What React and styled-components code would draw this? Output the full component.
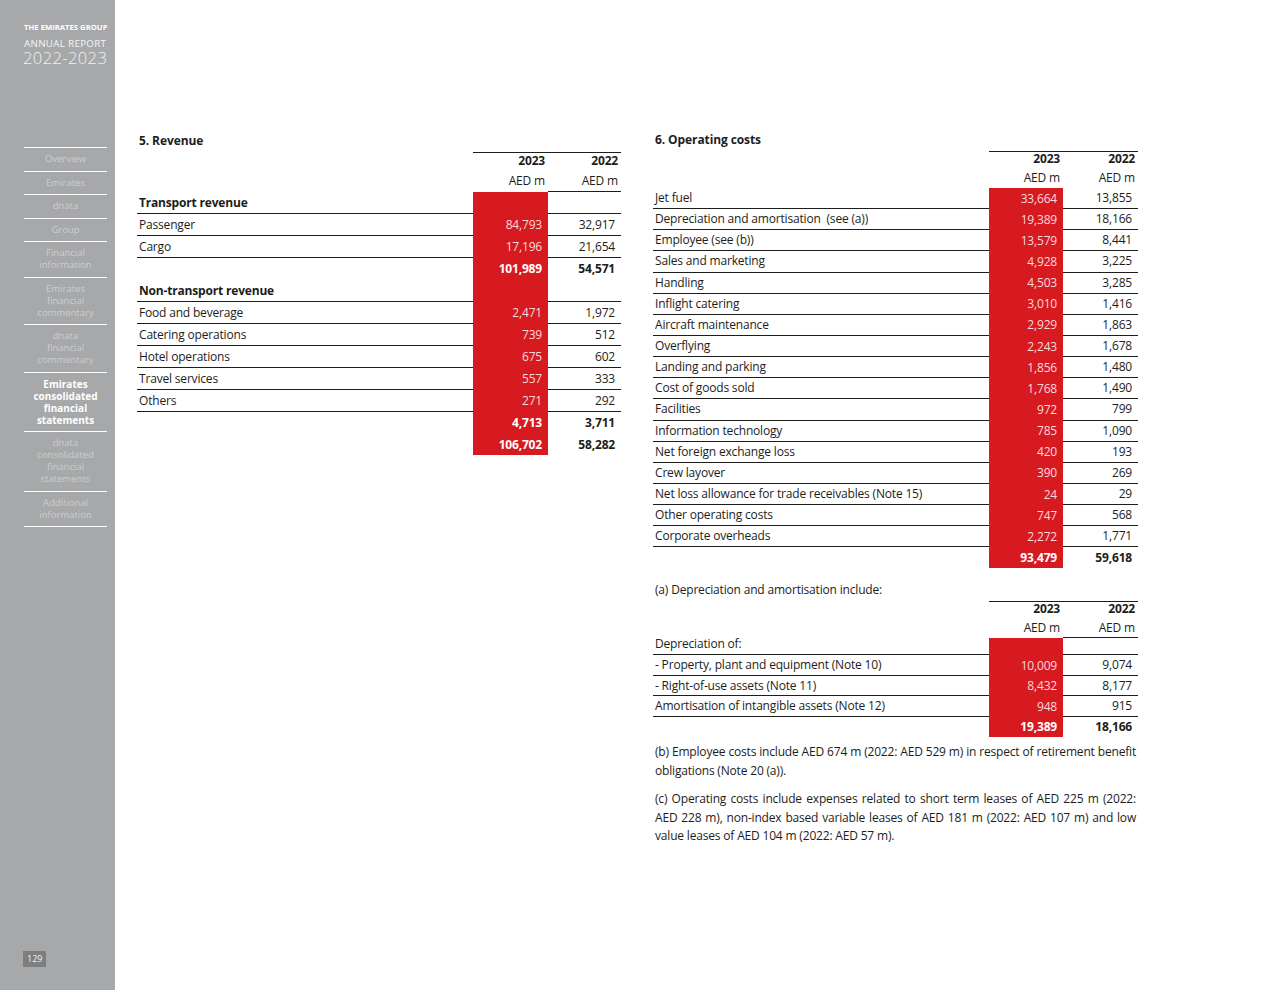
import React from 'react';
import styled, { createGlobalStyle } from 'styled-components';

const RED = '#d71920';
const INK = '#1d1d1b';

const GlobalStyle = createGlobalStyle`
  html, body {
    margin: 0;
    padding: 0;
    background: #fff;
  }
  body {
    font-family: 'Open Sans', 'Noto Sans', sans-serif;
    color: ${INK};
  }
`;

const Page = styled.div`
  display: flex;
  width: 1280px;
  height: 990px;
  overflow: hidden;
`;

const Sidebar = styled.aside`
  width: 115px;
  flex-shrink: 0;
  box-sizing: border-box;
  padding: 21px 8px 23px 24px;
  background: #a7a8aa;
  display: flex;
  flex-direction: column;
  color: #fff;
`;

const Brand = styled.div`
  font-size: 7.7px;
  font-weight: 700;
  line-height: 12px;
  white-space: nowrap;
`;

const ReportLabel = styled.div`
  margin-top: 5px;
  font-size: 9.8px;
  line-height: 11px;
  letter-spacing: 0.3px;
  white-space: nowrap;
  color: #f4f4f4;
`;

const ReportYear = styled.div`
  margin: 1px 0 0 -1px;
  font-size: 16.5px;
  font-weight: 300;
  line-height: 16px;
  letter-spacing: 0.4px;
  white-space: nowrap;
  color: #f2f2f2;
`;

const Nav = styled.nav`
  margin-top: 81px;
  border-top: 1px solid #fff;
`;

const NavItem = styled.div`
  padding: 5px 0 5.5px;
  border-bottom: 1px solid #fff;
  text-align: center;
  font-size: ${p => (p.$active ? '10px' : '9.5px')};
  font-weight: ${p => (p.$active ? 700 : 400)};
  line-height: 12px;
  color: ${p => (p.$active ? '#fff' : '#cdcecf')};
`;

const PageNum = styled.div`
  margin-top: auto;
  margin-left: -1px;
  align-self: flex-start;
  padding: 2px 4px;
  background: #7d7e80;
  font-size: 9px;
  line-height: 12px;
  color: #f2f2f2;
`;

const Main = styled.main`
  flex: 1;
  display: flex;
  align-items: flex-start;
  gap: 32px;
  padding: 132px 0 0 22px;
`;

const Column = styled.section`
  width: ${p => p.$w}px;
  margin-top: ${p => p.$offset || 0}px;
`;

const SectionTitle = styled.h2`
  margin: 0 0 3px;
  padding-left: 2px;
  font-size: 12px;
  font-weight: 700;
  line-height: 16px;
  letter-spacing: -0.1px;
`;

const Row = styled.div`
  display: grid;
  grid-template-columns: 1fr ${p => p.$cols};
  grid-template-rows: minmax(0, 1fr);
  height: ${p => p.$h}px;
  font-size: 12px;
  line-height: 14px;
  letter-spacing: -0.18px;
`;

const Cell = styled.div`
  box-sizing: border-box;
  display: flex;
  align-items: ${p => (p.$bottom ? 'flex-end' : 'center')};
  white-space: nowrap;
  font-weight: ${p => (p.$bold ? 700 : 400)};
  border-top: ${p => (p.$top ? `1px solid ${INK}` : 'none')};
  border-bottom: ${p => (p.$line ? `1px solid ${INK}` : 'none')};
  box-shadow: ${p => (p.$under ? `inset 0 -1px 0 ${INK}` : 'none')};
  padding-bottom: ${p => p.$pb || 0}px;
`;

const Label = styled(Cell)`
  padding-left: 2px;
`;

const Num = styled(Cell)`
  justify-content: flex-end;
  padding-right: ${p => (p.$head ? 3 : 6)}px;
  background: ${p => (p.$red ? RED : 'transparent')};
  color: ${p => (p.$red ? (p.$bold ? '#fff' : '#fadadb') : INK)};
`;

const Note = styled.p`
  margin: 13px 0 2px;
  padding-left: 2px;
  font-size: 12px;
  line-height: 18px;
  letter-spacing: -0.18px;
`;

const Para = styled.p`
  margin: ${p => (p.$first ? 6 : 9)}px 0 0;
  padding: 0 2px;
  font-size: 12px;
  line-height: 18.7px;
  letter-spacing: -0.18px;
  text-align: justify;
`;

const navItems = [
  ['Overview'],
  ['Emirates'],
  ['dnata'],
  ['Group'],
  ['Financial', 'information'],
  ['Emirates', 'financial', 'commentary'],
  ['dnata', 'financial', 'commentary'],
  ['Emirates', 'consolidated', 'financial', 'statements'],
  ['dnata', 'consolidated', 'financial', 'statements'],
  ['Additional', 'information'],
];

const revenueRows = [
  { label: 'Transport revenue', bold: true, line: true, h: 22 },
  { label: 'Passenger', a: '84,793', b: '32,917', line: true, h: 22 },
  { label: 'Cargo', a: '17,196', b: '21,654', line: true, h: 22 },
  { a: '101,989', b: '54,571', bold: true, h: 22 },
  { label: 'Non-transport revenue', bold: true, line: true, h: 22 },
  { label: 'Food and beverage', a: '2,471', b: '1,972', line: true, h: 22 },
  { label: 'Catering operations', a: '739', b: '512', line: true, h: 22 },
  { label: 'Hotel operations', a: '675', b: '602', line: true, h: 22 },
  { label: 'Travel services', a: '557', b: '333', line: true, h: 22 },
  { label: 'Others', a: '271', b: '292', line: true, h: 22 },
  { a: '4,713', b: '3,711', bold: true, h: 22 },
  { a: '106,702', b: '58,282', bold: true, h: 21 },
];

const costItems = [
  ['Jet fuel', '33,664', '13,855'],
  ['Depreciation and amortisation\u00a0\u00a0(see (a))', '19,389', '18,166'],
  ['Employee (see (b))', '13,579', '8,441'],
  ['Sales and marketing', '4,928', '3,225'],
  ['Handling', '4,503', '3,285'],
  ['Inflight catering', '3,010', '1,416'],
  ['Aircraft maintenance', '2,929', '1,863'],
  ['Overflying', '2,243', '1,678'],
  ['Landing and parking', '1,856', '1,480'],
  ['Cost of goods sold', '1,768', '1,490'],
  ['Facilities', '972', '799'],
  ['Information technology', '785', '1,090'],
  ['Net foreign exchange loss', '420', '193'],
  ['Crew layover', '390', '269'],
  ['Net loss allowance for trade receivables (Note 15)', '24', '29'],
  ['Other operating costs', '747', '568'],
  ['Corporate overheads', '2,272', '1,771'],
];

const costRows = [
  ...costItems.map(([label, a, b]) => ({ label, a, b, line: true, h: 21.15 })),
  { a: '93,479', b: '59,618', bold: true, h: 21 },
];

const deprRows = [
  { label: 'Depreciation of:', line: true, h: 17, pb: 4 },
  { label: '- Property, plant and equipment (Note 10)', a: '10,009', b: '9,074', line: true, h: 21 },
  { label: '- Right-of-use assets (Note 11)', a: '8,432', b: '8,177', line: true, h: 20 },
  { label: 'Amortisation of intangible assets (Note 12)', a: '948', b: '915', line: true, h: 21 },
  { a: '19,389', b: '18,166', bold: true, h: 20 },
];

const FinTable = ({ cols, yearH, unitH, unitPb, unitLine, rows }) => (
  <div>
    <Row $cols={cols} $h={yearH}>
      <Label />
      <Num $head $bold $top>2023</Num>
      <Num $head $bold $top>2022</Num>
    </Row>
    <Row $cols={cols} $h={unitH}>
      <Label />
      <Num $head $bottom $pb={unitPb}>AED m</Num>
      <Num $head $bottom $pb={unitPb} $under={unitLine}>AED m</Num>
    </Row>
    {rows.map((r, i) => (
      <Row key={i} $cols={cols} $h={r.h}>
        <Label $bold={r.bold} $line={r.line} $pb={r.pb}>{r.label}</Label>
        <Num $red $bold={r.bold}>{r.a}</Num>
        <Num $bold={r.bold} $line={r.line}>{r.b}</Num>
      </Row>
    ))}
  </div>
);

const App = () => (
  <Page>
    <GlobalStyle />
    <Sidebar>
      <Brand>THE EMIRATES GROUP</Brand>
      <ReportLabel>ANNUAL REPORT</ReportLabel>
      <ReportYear>2022-2023</ReportYear>
      <Nav>
        {navItems.map((lines, i) => (
          <NavItem key={i} $active={i === 7}>
            {lines.map((l, j) => (
              <React.Fragment key={j}>
                {j > 0 && <br />}
                {l}
              </React.Fragment>
            ))}
          </NavItem>
        ))}
      </Nav>
      <PageNum>129</PageNum>
    </Sidebar>
    <Main>
      <Column $w={484} $offset={1}>
        <SectionTitle>5. Revenue</SectionTitle>
        <FinTable cols="75px 73px" yearH={16} unitH={24} unitPb={4} unitLine rows={revenueRows} />
      </Column>
      <Column $w={485}>
        <SectionTitle>6. Operating costs</SectionTitle>
        <FinTable cols="74px 75px" yearH={14} unitH={23} unitPb={3} rows={costRows} />
        <Note>(a) Depreciation and amortisation include:</Note>
        <FinTable cols="74px 75px" yearH={14} unitH={23} unitPb={3} unitLine rows={deprRows} />
        <Para $first>
          (b) Employee costs include AED 674 m (2022: AED 529 m) in respect of retirement benefit
          obligations (Note 20 (a)).
        </Para>
        <Para>
          (c) Operating costs include expenses related to short term leases of AED 225 m (2022:
          AED 228 m), non-index based variable leases of AED 181 m (2022: AED 107 m) and low
          value leases of AED 104 m (2022: AED 57 m).
        </Para>
      </Column>
    </Main>
  </Page>
);

export default App;
